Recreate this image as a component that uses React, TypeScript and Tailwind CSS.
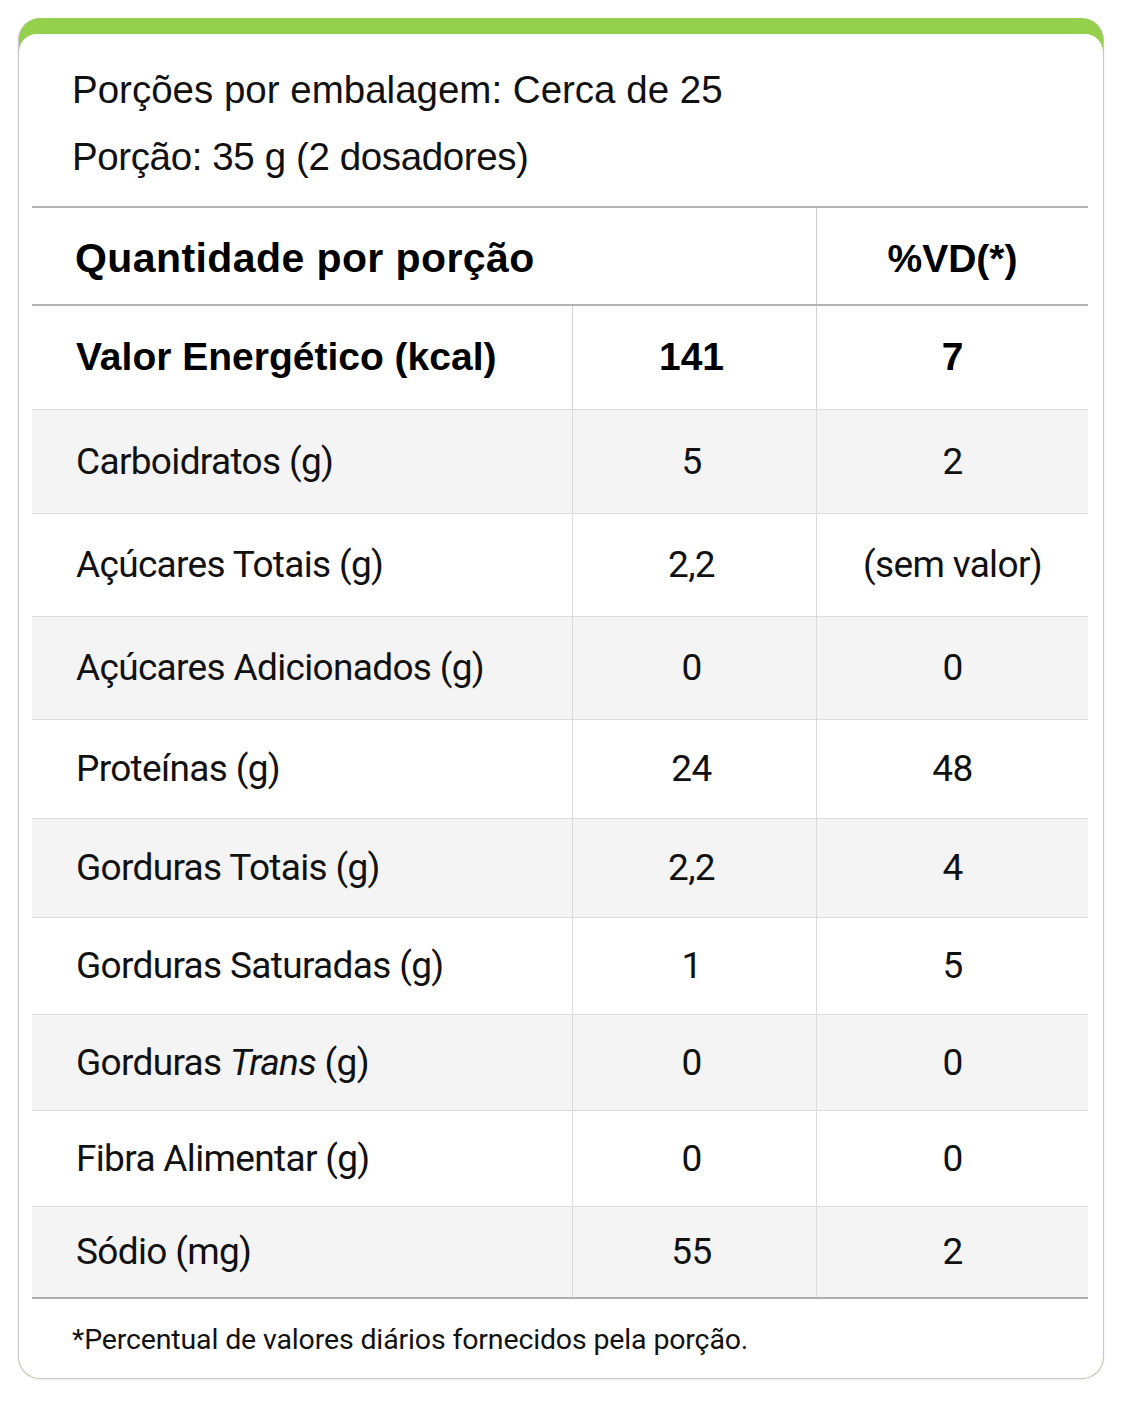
import React from 'react';

type Row = {
    label: React.ReactNode;
    qty: string;
    vd: string;
    h: string;
    shaded?: boolean;
};

const rows: Row[] = [
    { label: 'Carboidratos (g)', qty: '5', vd: '2', h: 'h-[104px]', shaded: true },
    { label: 'Açúcares Totais (g)', qty: '2,2', vd: '(sem valor)', h: 'h-[103px]' },
    { label: 'Açúcares Adicionados (g)', qty: '0', vd: '0', h: 'h-[103px]', shaded: true },
    { label: 'Proteínas (g)', qty: '24', vd: '48', h: 'h-[99px]' },
    { label: 'Gorduras Totais (g)', qty: '2,2', vd: '4', h: 'h-[99px]', shaded: true },
    { label: 'Gorduras Saturadas (g)', qty: '1', vd: '5', h: 'h-[97px]' },
    {
        label: (
            <span>
                Gorduras <em className="italic">Trans</em> (g)
            </span>
        ),
        qty: '0',
        vd: '0',
        h: 'h-[96px]',
        shaded: true,
    },
    { label: 'Fibra Alimentar (g)', qty: '0', vd: '0', h: 'h-[96px]' },
    { label: 'Sódio (mg)', qty: '55', vd: '2', h: 'h-[92px]', shaded: true },
];

const grid = 'grid grid-cols-[540px_244px_272px]';
const body = "font-['Roboto',sans-serif] text-[37px] text-[#111] tracking-[-0.018em]";
const heavy = "font-['Liberation_Sans',Arial,sans-serif] font-bold text-black";

export default function App() {
    return (
        <div className="min-h-[1402px] bg-white pt-[18px] pl-[18px]">
            <div className="w-[1086px] overflow-hidden rounded-[22px] border-x border-b border-[#c6c6c6] bg-[#95d04d] pt-[16px] shadow-[0_1px_3px_rgba(0,0,0,0.08)]">
                <div className="rounded-t-[18px] bg-white">
                    {/* serving info */}
                    <div className="pt-[22px] pb-[16px] pl-[53px] font-['Liberation_Sans',Arial,sans-serif] text-[38.5px] leading-[67px] text-[#111]">
                        <p>Porções por embalagem: Cerca de 25</p>
                        <p className="tracking-[-0.01em]">Porção: 35 g (2 dosadores)</p>
                    </div>

                    <div className="pl-[13px] pr-[15px]">
                        {/* header */}
                        <div className={`${grid} h-[100px] border-y-2 border-[#b4b4b4]`}>
                            <div className={`col-span-2 flex items-center pt-[6px] pl-[43px] text-[41px] tracking-[0.01em] ${heavy}`}>
                                Quantidade por porção
                            </div>
                            <div className={`flex items-center justify-center border-l border-[#cfcfcf] pt-[6px] text-[39px] ${heavy}`}>
                                %VD(*)
                            </div>
                        </div>

                        {/* energy row */}
                        <div className={`${grid} h-[104px] border-b border-[#dcdcdc]`}>
                            <div className={`flex items-center pl-[44px] text-[39px] ${heavy}`}>
                                Valor Energético (kcal)
                            </div>
                            <div className={`flex items-center justify-center border-l border-[#d2d2d2] pr-[6px] text-[39px] ${heavy}`}>
                                141
                            </div>
                            <div className={`flex items-center justify-center border-l border-[#d2d2d2] text-[39px] ${heavy}`}>
                                7
                            </div>
                        </div>

                        {rows.map((r, i) => (
                            <div
                                key={i}
                                className={`${grid} ${r.h} ${body} ${r.shaded ? 'bg-[#f4f4f4]' : 'bg-white'} ${
                                    i === rows.length - 1 ? 'border-b-2 border-[#b0b0b0]' : 'border-b border-[#dcdcdc]'
                                }`}
                            >
                                <div className="flex items-center pl-[44px]">{r.label}</div>
                                <div className="flex items-center justify-center border-l border-[#dadada] pr-[6px]">{r.qty}</div>
                                <div className="flex items-center justify-center border-l border-[#dadada]">{r.vd}</div>
                            </div>
                        ))}
                    </div>

                    {/* footnote */}
                    <div className="flex h-[79px] items-center pt-[4px] pl-[53px] font-['Roboto',sans-serif] text-[28.5px] tracking-[-0.005em] text-[#111]">
                        *Percentual de valores diários fornecidos pela porção.
                    </div>
                </div>
            </div>
        </div>
    );
}
